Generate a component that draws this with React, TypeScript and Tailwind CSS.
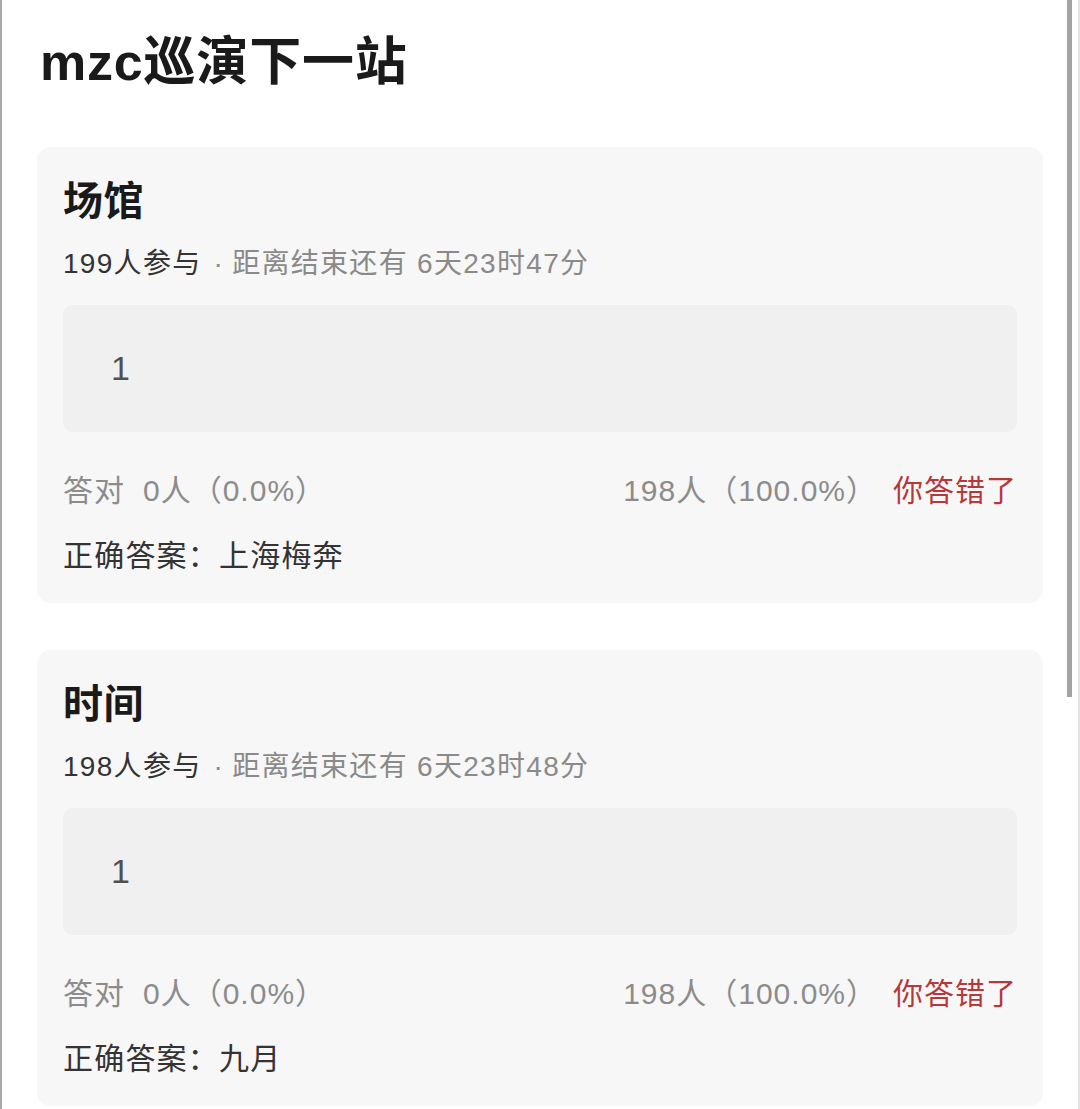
const font = "font-['Liberation_Sans','Noto_Sans_CJK_SC',sans-serif]";

type Quiz = {
  title: string;
  joined: string;
  remaining: string;
  answer: string;
};

const quizzes: Quiz[] = [
  { title: "场馆", joined: "199人参与", remaining: "距离结束还有 6天23时47分", answer: "上海梅奔" },
  { title: "时间", joined: "198人参与", remaining: "距离结束还有 6天23时48分", answer: "九月" },
];

function QuizCard({ quiz }: { quiz: Quiz }) {
  return (
    <section className="rounded-[14px] bg-[#f7f7f7] px-[26px] pt-[30px] pb-[28px]">
      <h2 className="text-[40px] leading-[49px] font-bold tracking-[0.5px] text-[#1a1a1a]">{quiz.title}</h2>
      <p className="mt-[20px] flex items-center text-[28px] leading-[36px] tracking-[1.3px] text-[#8a8a8a]">
        <span className="text-[#333333]">{quiz.joined}</span>
        <span className="mr-[8px] ml-[12px]">·</span>
        <span>{quiz.remaining}</span>
      </p>
      <div className="mt-[23px] flex h-[127px] items-center rounded-[10px] bg-[#f0f0f0] pl-[48px] text-[34px] text-[#505050]">
        1
      </div>
      <div className="mt-[38px] flex h-[40px] items-center justify-between text-[30px] tracking-[1px] text-[#8c8c8c]">
        <div className="flex items-center">
          <span>答对</span>
          <span className="ml-[18px]">0人（0.0%）</span>
        </div>
        <div className="flex items-center">
          <span>198人（100.0%）</span>
          <span className="ml-[16px] text-[#b5383b]">你答错了</span>
        </div>
      </div>
      <div className="mt-[25px] flex h-[40px] items-center text-[30px] tracking-[1.2px] text-[#333333]">
        <span>正确答案：</span>
        <span>{quiz.answer}</span>
      </div>
    </section>
  );
}

export default function App() {
  return (
    <div className={`relative h-[1109px] w-[1080px] overflow-hidden border-l-2 border-r-2 border-l-[#a8a8a8] border-r-[#e4e4e4] bg-white ${font}`}>
      <div className="absolute top-0 right-[6px] h-[697px] w-[5px] bg-[#a3a3a3]" />
      <div className="px-[35px]">
        <h1 className="pt-[34px] pl-[3px] text-[52px] leading-[56px] font-bold tracking-[0.8px] text-[#1a1a1a]">mzc巡演下一站</h1>
        <div className="mt-[57px] flex flex-col gap-[47px]">
          {quizzes.map((q) => (
            <QuizCard key={q.title} quiz={q} />
          ))}
        </div>
      </div>
    </div>
  );
}
